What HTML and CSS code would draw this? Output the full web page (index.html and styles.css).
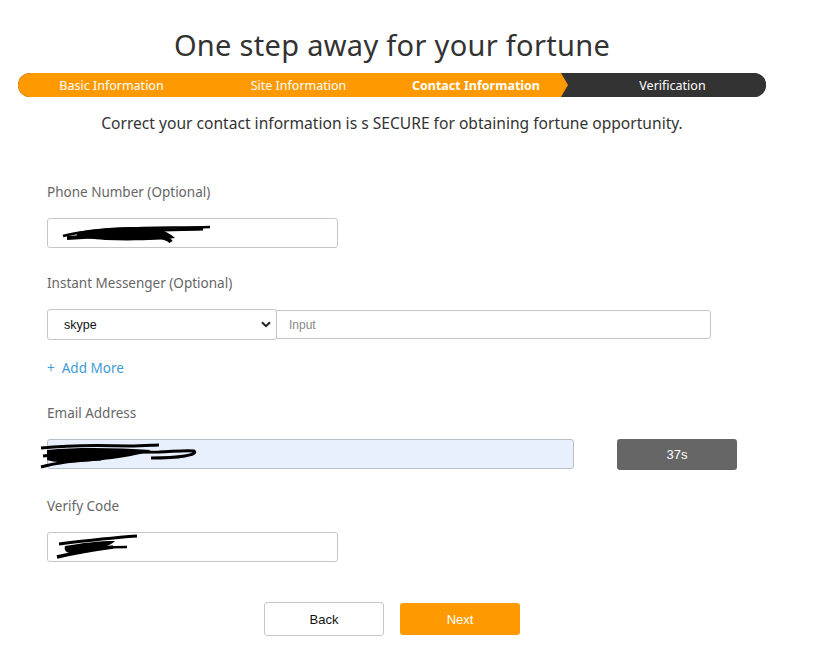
FILE: index.html
```html
<!DOCTYPE html>
<html lang="en">
<head>
    <meta charset="UTF-8">
    <meta name="viewport" content="width=device-width, initial-scale=1.0">
    <title>Contact Information</title>
    <link rel="stylesheet" href="styles.css">
</head>
<body>
    <div class="page">
        <h1 class="title">One step away for your fortune</h1>

        <!-- Steps -->
        <div class="steps">
            <div class="step step-done">Basic Information</div>
            <div class="step step-done">Site Information</div>
            <div class="step step-current">Contact Information</div>
            <div class="step step-next">Verification</div>
        </div>

        <p class="subtitle">Correct your contact information is s SECURE for obtaining fortune opportunity.</p>

        <div class="form">
            <!-- Phone -->
            <div class="field">
                <label class="field-label">Phone Number (Optional)</label>
                <div class="input-wrap short">
                    <input type="text" class="input" value="">
                    <svg class="scribble" width="170" height="30" viewBox="0 0 170 30">
                        <path d="M10 18 C25 14 45 12 70 11 C95 9 125 10 157 9" stroke="#000" stroke-width="2.5" fill="none"/>
                        <path d="M24 14 C50 9 80 8 104 10 C112 13 118 16 122 20 C110 22 80 23 52 22 C40 21 30 20 24 18 Z" fill="#000"/>
                        <path d="M14 20 C40 18 70 17 100 17 C110 19 116 21 118 24" stroke="#000" stroke-width="4" fill="none"/>
                        <path d="M60 14 C90 12 120 12 150 11" stroke="#000" stroke-width="3" fill="none"/>
                    </svg>
                </div>
            </div>

            <!-- Messenger -->
            <div class="field">
                <label class="field-label">Instant Messenger (Optional)</label>
                <div class="im-row">
                    <div class="select-box">
                        <span>skype</span>
                        <svg width="10" height="7" viewBox="0 0 10 7"><path d="M1 1.2 L5 5.2 L9 1.2" stroke="#222" stroke-width="2" fill="none"/></svg>
                    </div>
                    <input type="text" class="input im-input" placeholder="Input">
                </div>
                <a href="#" class="add-more">+&nbsp; Add More</a>
            </div>

            <!-- Email -->
            <div class="field field-email">
                <label class="field-label">Email Address</label>
                <div class="email-row">
                    <div class="input-wrap email">
                        <input type="text" class="input input-filled" value="">
                        <svg class="scribble scribble-email" width="170" height=" 34" viewBox="0 0 170 34">
                            <path d="M2 10 C30 7 60 7 90 8 C105 8 115 7 120 7" stroke="#000" stroke-width="3" fill="none"/>
                            <path d="M8 12 C40 9 80 10 112 12 C100 18 70 22 40 24 C25 25 14 24 8 22 Z" fill="#000"/>
                            <path d="M4 18 C40 14 80 14 120 14 C140 13 150 12 155 13 C160 17 140 20 112 20" stroke="#000" stroke-width="3" fill="none"/>
                            <path d="M2 29 C20 24 40 22 62 21" stroke="#000" stroke-width="3" fill="none"/>
                        </svg>
                    </div>
                    <button class="count-btn">37s</button>
                </div>
            </div>

            <!-- Verify -->
            <div class="field">
                <label class="field-label">Verify Code</label>
                <div class="input-wrap short">
                    <input type="text" class="input" value="">
                    <svg class="scribble" width="100" height="30" viewBox="0 0 100 30">
                        <path d="M6 12 C30 9 55 6 84 4" stroke="#000" stroke-width="3" fill="none"/>
                        <path d="M12 14 C30 11 45 9 62 9 C56 15 40 20 24 22 C16 22 10 20 12 14 Z" fill="#000"/>
                        <path d="M4 25 C25 20 45 17 60 15" stroke="#000" stroke-width="3.5" fill="none"/>
                        <path d="M30 16 C45 16 60 15 74 15" stroke="#000" stroke-width="2.5" fill="none"/>
                    </svg>
                </div>
            </div>

            <div class="actions">
                <button class="btn btn-back">Back</button>
                <button class="btn btn-next">Next</button>
            </div>
        </div>
    </div>
</body>
</html>
```

FILE: styles.css
```css
/* Body */
body {
    margin: 0;
    padding: 0;
    background: #fff;
    font-family: "Noto Sans", "Open Sans", sans-serif;
    color: #333;
}

.page {
    width: 748px;
    margin-left: 18px;
    padding-top: 25px;
}

/* Heading */
.title {
    margin: 0 0 8px;
    font-size: 29px;
    font-weight: 400;
    line-height: 40px;
    text-align: center;
    color: #333;
    letter-spacing: 0.3px;
}

/* Steps bar */
.steps {
    display: flex;
    height: 24px;
    border-radius: 12px;
    overflow: hidden;
    background: #333;
}

.step {
    position: relative;
    display: flex;
    align-items: center;
    justify-content: center;
    font-size: 12.5px;
    color: #fff;
    white-space: nowrap;
}

.step-done {
    width: 187px;
    background: #fe9a00;
}

.step-current {
    z-index: 1;
    width: 168px;
    padding-right: 1px;
    background: #fe9a00;
    font-weight: 700;
}

.step-current::after {
    content: "";
    position: absolute;
    right: -7px;
    top: 0;
    border-top: 12px solid transparent;
    border-bottom: 12px solid transparent;
    border-left: 7px solid #fe9a00;
}

.step-next {
    flex: 1;
    padding-left: 18px;
    background: #333;
}

.subtitle {
    margin: 14px 0 0;
    font-size: 15.6px;
    line-height: 24px;
    text-align: center;
    color: #333;
}

/* Form */
.form {
    padding: 47px 0 0 29px;
}

.field {
    margin-bottom: 25px;
}

.field-email {
    margin-bottom: 26px;
}

.field-label {
    display: block;
    margin-bottom: 16px;
    font-size: 13.5px;
    line-height: 20px;
    color: #666;
}

.input-wrap {
    position: relative;
}

.input-wrap.short {
    width: 291px;
}

.input {
    box-sizing: border-box;
    width: 100%;
    height: 30px;
    padding: 0 12px;
    border: 1px solid #c3c6cc;
    border-radius: 3px;
    background: #fff;
    font-family: "Liberation Sans", Arial, sans-serif;
    font-size: 12px;
    outline: none;
}

.input::placeholder {
    color: #888;
}

.input-filled {
    background: #e8f0fe;
    border-color: #b8bfc9;
}

/* Redaction marks */
.scribble {
    position: absolute;
    left: 6px;
    top: 0;
    pointer-events: none;
}

.scribble-email {
    left: -8px;
    top: -1px;
}

/* Messenger row */
.im-row {
    display: flex;
    align-items: flex-start;
}

.select-box {
    box-sizing: border-box;
    display: flex;
    align-items: center;
    justify-content: space-between;
    width: 230px;
    height: 31px;
    padding: 0 5px 0 16px;
    border: 1px solid #c3c6cc;
    border-radius: 3px;
    font-family: "Liberation Sans", Arial, sans-serif;
    font-size: 12.5px;
    color: #111;
}

.im-input {
    width: 435px;
    height: 29px;
    margin-top: 1px;
    margin-left: -1px;
    border-radius: 0 3px 3px 0;
}

.add-more {
    display: inline-block;
    margin-top: 18px;
    font-size: 13.5px;
    line-height: 20px;
    color: #3d9bd6;
    text-decoration: none;
}

/* Email row */
.email-row {
    display: flex;
    align-items: flex-start;
    gap: 43px;
}

.input-wrap.email {
    width: 527px;
}

.count-btn {
    width: 120px;
    height: 31px;
    border: none;
    border-radius: 3px;
    background: #666;
    color: #fff;
    font-family: "Liberation Sans", Arial, sans-serif;
    font-size: 13px;
}

/* Buttons */
.actions {
    display: flex;
    align-items: center;
    gap: 16px;
    padding: 15px 0 0 217px;
}

.btn {
    box-sizing: border-box;
    width: 120px;
    border-radius: 3px;
    font-family: "Liberation Sans", Arial, sans-serif;
    font-size: 13px;
    cursor: pointer;
}

.btn-back {
    height: 34px;
    border: 1px solid #c3c6cc;
    background: #fff;
    color: #111;
}

.btn-next {
    height: 32px;
    border: none;
    background: #fe9a00;
    color: #fff;
}
```
